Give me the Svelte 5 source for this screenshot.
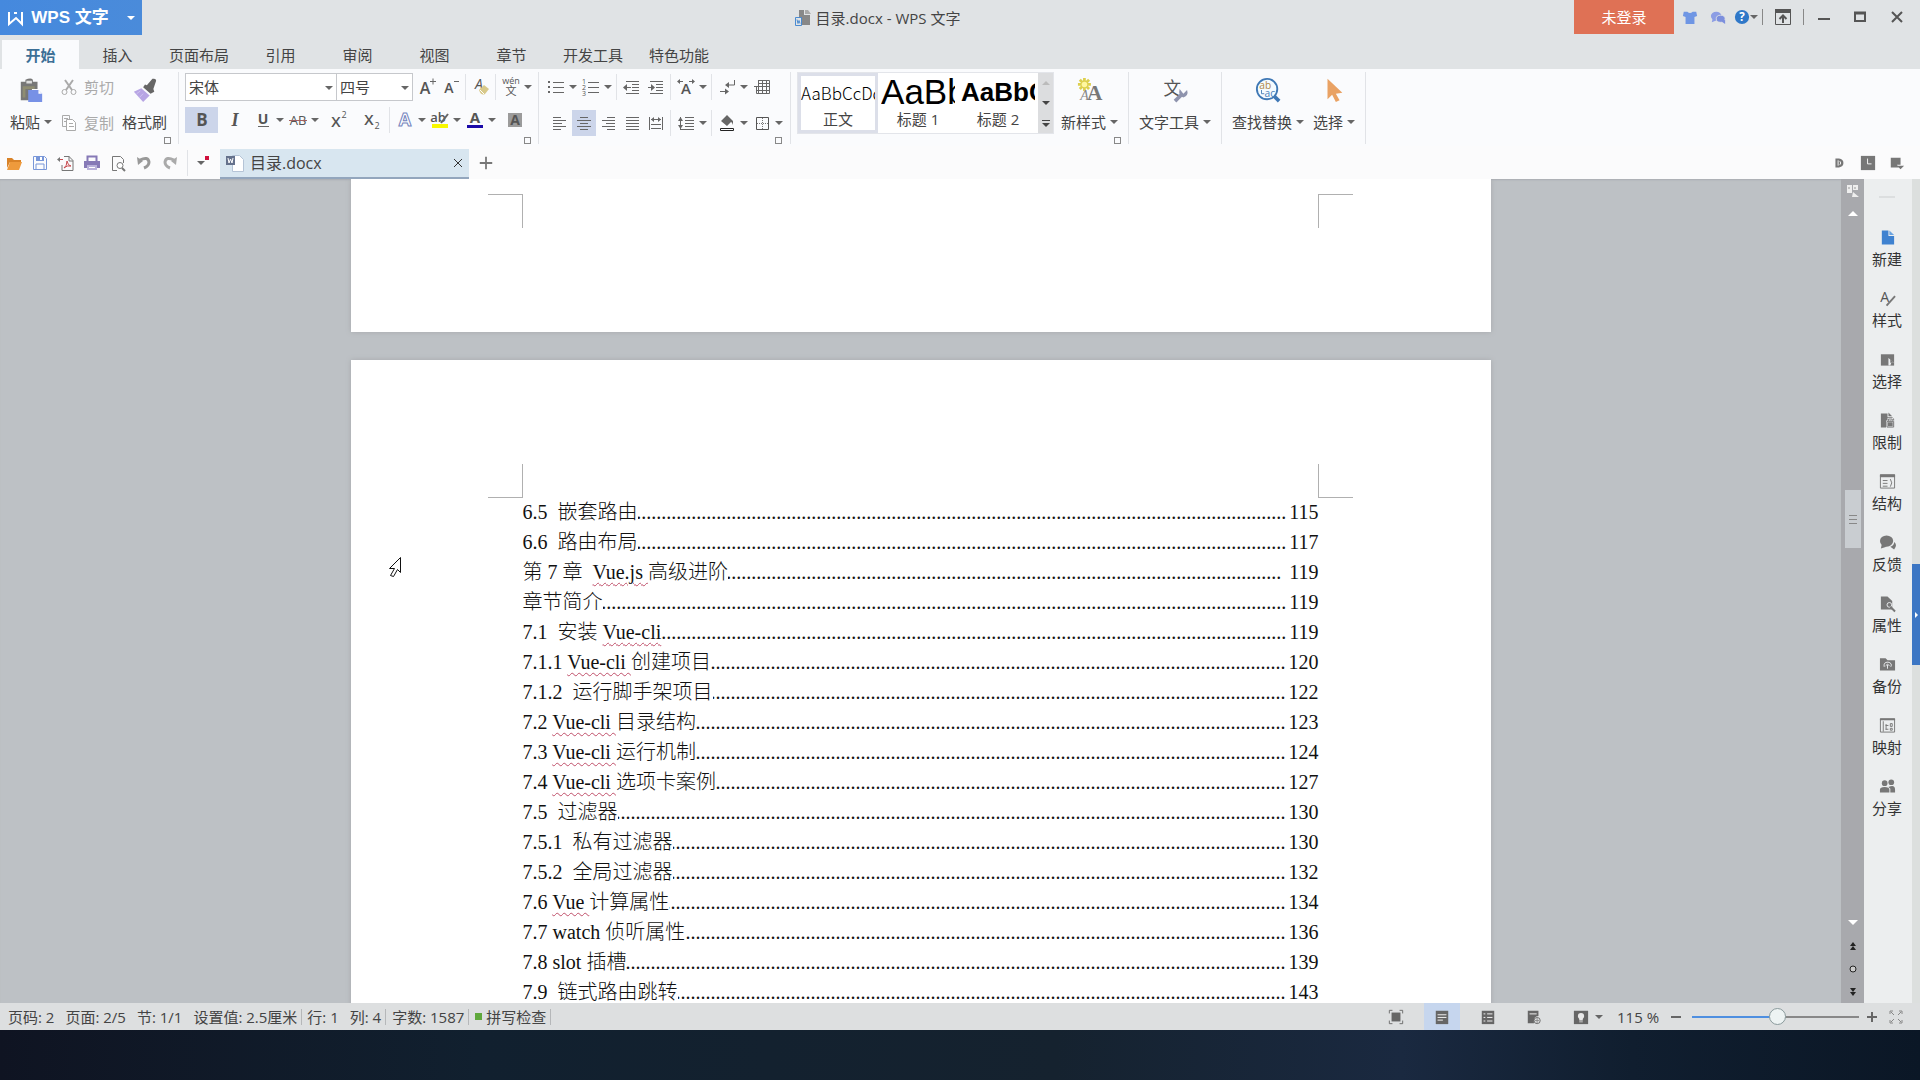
<script lang="ts">
	type Tool = { icon?: string; label?: string; kind?: 'split' | 'wide' | 'sep'; on?: boolean };

	const menus = ['开始', '插入', '页面布局', '引用', '审阅', '视图', '章节', '开发工具', '特色功能'];

	const fontTop: Tool[] = [
		{ icon: 'grow', label: '增大字号' },
		{ icon: 'shrink', label: '减小字号' },
		{ kind: 'sep' },
		{ icon: 'clear', label: '清除格式' },
		{ kind: 'sep' },
		{ icon: 'pinyin', label: '拼音指南', kind: 'split' }
	];
	const fontBottom: Tool[] = [
		{ icon: 'bold', label: '加粗', kind: 'wide', on: true },
		{ icon: 'italic', label: '倾斜', kind: 'wide' },
		{ icon: 'underline', label: '下划线', kind: 'split' },
		{ icon: 'strike', label: '删除线', kind: 'split' },
		{ icon: 'sup', label: '上标', kind: 'wide' },
		{ icon: 'sub', label: '下标', kind: 'wide' },
		{ kind: 'sep' },
		{ icon: 'effect', label: '文字效果', kind: 'split' },
		{ icon: 'highlight', label: '突出显示', kind: 'split' },
		{ icon: 'color', label: '字体颜色', kind: 'split' },
		{ icon: 'shade', label: '字符底纹', kind: 'wide' }
	];
	const paraTop: Tool[] = [
		{ icon: 'bullets', label: '项目符号', kind: 'split' },
		{ icon: 'numbers', label: '编号', kind: 'split' },
		{ kind: 'sep' },
		{ icon: 'outdent', label: '减少缩进量' },
		{ icon: 'indent', label: '增加缩进量' },
		{ kind: 'sep' },
		{ icon: 'scale', label: '中文版式', kind: 'split' },
		{ kind: 'sep' },
		{ icon: 'marks', label: '显示段落标记', kind: 'split' },
		{ icon: 'grid', label: '插入表格' }
	];
	const paraBottom: Tool[] = [
		{ icon: 'left', label: '左对齐' },
		{ icon: 'center', label: '居中对齐', on: true },
		{ icon: 'right', label: '右对齐' },
		{ icon: 'justify', label: '两端对齐' },
		{ icon: 'distribute', label: '分散对齐' },
		{ kind: 'sep' },
		{ icon: 'spacing', label: '行距', kind: 'split' },
		{ kind: 'sep' },
		{ icon: 'bucket', label: '底纹颜色', kind: 'split' },
		{ icon: 'border', label: '边框', kind: 'split' }
	];
	const quick = [
		['folder', '打开'],
		['save', '保存'],
		['pdf', '输出为PDF'],
		['print', '打印'],
		['preview', '打印预览'],
		['undo', '撤消'],
		['redo', '恢复']
	];
	const panels = [
		['newdoc', '新建'],
		['stylepen', '样式'],
		['pick', '选择'],
		['limit', '限制'],
		['outline', '结构'],
		['feedback', '反馈'],
		['props', '属性'],
		['backup', '备份'],
		['map', '映射'],
		['share', '分享']
	];
	const views = [
		['vfull', '全屏显示'],
		['vpage', '页面视图'],
		['voutline', '大纲'],
		['vweb', 'Web版式']
	];

	// [before, misspelled word, after, page]
	const toc = [
		['6.5  嵌套路由', '', '', '115'],
		['6.6  路由布局', '', '', '117'],
		['第 7 章  ', 'Vue.js ', '高级进阶', ' 119'],
		['章节简介', '', '', '119'],
		['7.1  安装 ', 'Vue-cli', '', '119'],
		['7.1.1 ', 'Vue-cli ', '创建项目', '120'],
		['7.1.2  运行脚手架项目', '', '', '122'],
		['7.2 ', 'Vue-cli ', '目录结构', '123'],
		['7.3 ', 'Vue-cli ', '运行机制', '124'],
		['7.4 ', 'Vue-cli ', '选项卡案例', '127'],
		['7.5  过滤器', '', '', '130'],
		['7.5.1  私有过滤器', '', '', '130'],
		['7.5.2  全局过滤器', '', '', '132'],
		['7.6 ', 'Vue ', '计算属性', '134'],
		['7.7 watch 侦听属性', '', '', '136'],
		['7.8 slot 插槽', '', '', '139'],
		['7.9  链式路由跳转', '', '', '143']
	];
	const dots = '.'.repeat(200);

	const line = (d: string, c = '#666', w = 1) => `<path d="${d}" fill="none" stroke="${c}" stroke-width="${w}"/>`;
	const fill = (d: string, c = '#666') => `<path d="${d}" fill="${c}"/>`;
	const text = (t: string, x: number, y: number, size: number, extra = '') =>
		`<text x="${x}" y="${y}" font-size="${size}" text-anchor="middle" fill="#555" ${extra}>${t}</text>`;

	const icons: Record<string, string> = {
		grow: text('A', 7, 16, 16, 'font-weight="600"') + line('M12 3.5h6M15 .5v6', '#666', 1),
		shrink: text('A', 7, 15, 14, 'font-weight="600"') + line('M12 3.5h5', '#666', 1),
		clear: text('A', 7, 11, 14, 'font-style="italic"') + fill('M7 12l5-5 5 4-4 5q-4 2-6-4z', '#d8c98a') + line('M8 12l4 4', '#fff', 1),
		pinyin: text('wén', 9, 6, 9) + text('文', 9, 17, 11),
		bold: text('B', 9, 15, 17, 'font-weight="700"'),
		italic: text('I', 9, 15, 18, 'font-style="italic" font-weight="700" font-family="Liberation Serif"'),
		underline: text('U', 9, 13, 14, 'font-weight="700"') + line('M4 15.5h11', '#666', 1),
		strike: text('AB', 9, 14, 13, 'font-weight="400"') + line('M0 9.5h18', '#a06060', 1),
		sup: text('X', 7, 16, 15, 'font-weight="600"') + text('2', 15, 7, 9),
		sub: text('X', 7, 14, 15, 'font-weight="600"') + text('2', 15, 18, 9),
		effect: '<text x="9" y="15" font-size="18" font-weight="700" text-anchor="middle" fill="#fff" stroke="#7484bd" stroke-width="1">A</text>',
		highlight: text('ab', 7, 11, 13, 'font-weight="600"') + line('M17 3l-7 9', '#666', 2) + fill('M1 13h16v4H1z', '#f8f800'),
		color: text('A', 9, 12, 15, 'font-weight="700"') + fill('M1 14h16v3H1z', '#1a0aa8'),
		shade: fill('M2 2h14v14H2z', '#9b9b9b') + text('A', 9, 14, 14, 'font-weight="700"'),
		bullets: fill('M1 3h2v2H1zM1 8h2v2H1zM1 13h2v2H1z') + line('M6 4.5h11M6 9.5h11M6 14.5h11'),
		numbers: text('1', 2, 6, 7) + text('2', 2, 12, 7) + text('3', 2, 18, 7) + line('M6 4.5h11M6 9.5h11M6 14.5h11'),
		outdent: line('M3 3.5h13M9 6.5h7M9 9.5h7M9 12.5h7M3 15.5h13') + line('M8 9.5H3') + fill('M4 6v7L0 9.5z'),
		indent: line('M3 3.5h13M9 6.5h7M9 9.5h7M9 12.5h7M3 15.5h13') + line('M1 9.5h4') + fill('M4 6v7l4-3.5z'),
		scale: text('A', 9, 16, 15, 'font-weight="600"') + fill('M3 1v5L0 3.500zM15 1v5l3-2.500z') + line('M2 3.500h4M12 3.500h4'),
		marks: line('M16.5 2v5H9M2 13.5h7') + fill('M11 4v6L7 7zM7 10.500v6l4-3z'),
		grid: line('M5.500 2.500h11v13h-13v-7M1 8.500h16M5.500 2v13M9.500 2v13M13.500 2v13M4 12.500h13M5 5.500h12'),
		left: line('M2 3.500h8M2 6.500h13M2 9.500h9M2 12.500h13M2 15.500h8'),
		center: line('M5 3.500h8M2 6.500h14M5 9.500h8M2 12.500h14M5 15.500h8'),
		right: line('M8 3.500h8M3 6.500h13M7 9.500h9M3 12.500h13M8 15.500h8'),
		justify: line('M3 3.500h13M3 6.500h13M3 9.500h13M3 12.500h13M3 15.500h13'),
		distribute: line('M2.500 3v13M15.500 3v13M4 5.500h10M4 10.500h10M4 14.500h10') + fill('M7 3v5L4 5.500zM11 3v5l3-2.500z'),
		spacing: line('M8 3.500h9M8 6.500h9M8 9.500h9M8 12.500h9M3 15.500h14M3.500 3v12') + fill('M1 7l2.500-4L6 7zM1 11l2.500 4L6 11z'),
		bucket: fill('M3 7l6-6 6 6v4q-1-3-2-3l-4 4z') + line('M2.500 14.500h13v2h-13z', '#222'),
		border: line('M3.500 3.500h12v12h-12z', '#555') + '<path d="M9.500 4v11M4 9.500h11" stroke="#777" stroke-dasharray="1 1"/>',
		cut: line('M5 2l7 10M13 2L6 12', '#aaa', 2) + '<circle cx="4.500" cy="14" r="2.500" fill="none" stroke="#aaa"/><circle cx="13.500" cy="14" r="2.500" fill="none" stroke="#aaa"/>',
		copy: line('M2.500 1.500h7v11h-7zM4 4.500h4M4 7.500h4', '#aaa') + '<path d="M6.500 5.500h6l3 3v8h-9z" fill="#fff" stroke="#aaa"/>' + line('M9 9.500h4M9 12.500h5', '#aaa'),
		folder: fill('M2 4h5l2 2h7v2H5l-3 6z', '#d98227') + fill('M5 8h12l-3 8H2z', '#ee9a3c'),
		save: line('M2.500 2.500h11l2 2v11h-13z', '#7896d8', 1) + fill('M5 2h8v5H5z', '#7896d8') + fill('M9 3h2v3H9z', '#fff') + line('M5 15V10h8v5', '#7896d8'),
		pdf: line('M7 2.500h5l4 4v10H5V11M12 2v5h4', '#777') + line('M7 14q3-2 3-7q1 5 4 5q-4-1-7 2M1 5.500h5', '#c74a4f') + fill('M3 3v5L0 5.500z', '#777'),
		print: fill('M1 7h16v7H1z', '#8679b6') + line('M4.500 7V2.500h9V7', '#8679b6', 2) + fill('M4 11h10v5H4z', '#b9b1da') + line('M6 13.500h6', '#fff'),
		preview: line('M8 16.500H3.500v-14h8l3 3V9', '#777') + '<circle cx="11" cy="11.500" r="3" fill="#fff" stroke="#777"/>' + line('M13 14l3 3', '#777', 2),
		undo: line('M5 6q8-4 9 2q0 4-5 6', '#999', 3) + fill('M2 3l1 8 5-4z', '#999'),
		redo: line('M13 6Q5 2 4 8q0 4 5 6', '#aaa', 3) + fill('M16 3l-1 8-5-4z', '#aaa'),
		worddoc: '<path d="M6.500 1.500h7l4 4v12h-11z" fill="#fff" stroke="#b5c4d6"/>' + fill('M0 2h9v9H0z', '#65728c') + line('M2 4l1 5 1.500-4L6 9l1-5', '#fff'),
		titledoc: fill('M5 1h5v5H8v3H5zM8 6h8v10H8z', '#888') + fill('M11 1h3l3 4h-6z', '#aaa') + line('M1.500 8.500h6v8h-6zM3 10.500l1 4 1-3 1 3', '#4b8bd0'),
		shirt: fill('M2 3h4q3 3 6 0h4l1 5-3 1v8H4V9L1 8z', '#6f96e4'),
		chat: '<ellipse cx="7" cy="8" rx="6" ry="5" fill="#8c9de4"/>' + fill('M3 11l-1 4 5-2z', '#8c9de4') + '<ellipse cx="12" cy="11" rx="5" ry="4" fill="#7c8fdd" stroke="#dfe2e4"/>' + fill('M13 14l4 3v-5z', '#7c8fdd'),
		help: '<circle cx="9" cy="9" r="8" fill="#2f78c8"/><text x="9" y="14" font-size="13" font-weight="700" text-anchor="middle" fill="#fff">?</text>',
		ribbon: line('M1.500 2v14.500h15V2', '#555', 1) + fill('M1 1h16v4H1z', '#555') + line('M9 15V8M5.500 11L9 7.500 12.500 11', '#555', 2),
		min: line('M3 11h12', '#555', 2),
		max: line('M4 5h10v8H4z', '#555', 2) + line('M3 5h12', '#555', 3),
		close: line('M4 4l10 10M14 4L4 14', '#555', 2),
		x: line('M5 5l8 8M13 5l-8 8', '#333', 1),
		plus: line('M9 2v14M2 9h14', '#777', 2),
		small_d: fill('M5 4h4q5 1 5 5t-5 5H5z', '#777') + line('M8 6v6M10 7q2 2 0 4', '#fff'),
		clock: fill('M1 1h16v16H1z', '#777') + line('M8.500 4v6H13', '#fff', 1),
		panel: fill('M2 3h11v8H9l2 3H2zM9 12h8l-4 4z', '#777'),
		newdoc: fill('M3 2h7v6h6v9H3z', '#3f82d0') + fill('M11 2l5 5h-5z', '#6ca4e0'),
		stylepen: text('A', 6, 13, 15) + line('M17 7l-9 10', '#777', 2),
		pick: fill('M2 4h14v12H2z', '#777') + fill('M10 8l6 5h-3l-1 3h-2z', '#eceef0') + fill('M12 9l4 4h-4z', '#777'),
		limit: fill('M2 2h7v4h5l2 2v9H2z', '#777') + fill('M10 1l4 4h-4z', '#777') + line('M8.500 10.500h7v6h-7zM10 10V8h4v2', '#eceef0', 2) + line('M8.500 10.500h7v6h-7zM10 10V8h4v2', '#777'),
		outline: line('M1.500 2.500h15v14h-15zM4 8.500h5M4 11.500h5M4 14.500h5M12 7q3 4 0 8', '#777') + fill('M1 2h16v3H1z', '#777'),
		feedback: '<ellipse cx="8" cy="8" rx="7" ry="6" fill="#777"/>' + fill('M3 11l-1 5 6-2zM12 14q4-1 4-5 4 3 0 8z', '#777'),
		props: fill('M2 2h7l5 5v9H2z', '#777') + '<circle cx="11" cy="11" r="2.500" fill="#777" stroke="#eceef0"/>' + line('M12 13l5 5', '#777', 2),
		backup: fill('M1 3h6l2 2h8v11H1z', '#777') + line('M5.500 12q-1-5 4-5 5 1 3 5M9 14v-4M7 11l2-2 2 2', '#eceef0'),
		map: line('M1.500 2.500h15v14h-15zM4.500 5v11M7 9.500h3M7 13.500h3M7.500 8v6M12 7.500h2v3h-2zM12 12.500h2v2h-2z', '#777') + fill('M1 2h16v2H1z', '#777'),
		share: '<circle cx="6" cy="6" r="3" fill="#777"/><circle cx="13" cy="5" r="3" fill="#777"/>' + fill('M1 16v-3q0-3 5-3t5 3v3zM12 16v-4l-2-2q7-3 7 3v3z', '#777'),
		vfull: fill('M4 4h10v10H4z') + line('M1.500 5V1.500H5M13 1.500h3.500V5M16.500 13v3.500H13M5 16.500H1.500V13'),
		vpage: fill('M2 2h14v15H2z') + line('M4 6.500h10M4 9.500h10M4 12.500h6', '#fff'),
		voutline: fill('M2 2h14v15H2z') + line('M4 5.500h2M8 5.500h6M4 9.500h2M8 9.500h6M4 13.500h2M8 13.500h6', '#fff'),
		vweb: fill('M2 2h12v6q-6 0-5 8H2z') + line('M4 5.500h8', '#fff') + '<circle cx="12.500" cy="13" r="3.500" fill="none" stroke="#666"/>' + line('M10 13h5M12.500 10v6', '#888'),
		protect: fill('M1 2h16v15H1z') + '<circle cx="9" cy="8" r="3.500" fill="#e8e8e8"/>' + fill('M7 10h4v3H7zM7 14h4v1H7z', '#e8e8e8'),
		fit: line('M3 6V3h3M12 3h3v3M15 12v3h-3M6 15H3v-3M4 4l3 3M14 4l-3 3M14 14l-3-3M4 14l3-3', '#888'),
		minus: line('M4 9h10', '#666', 2),
		add: line('M4 9h10M9 4v10', '#666', 2)
	};

	const bigIcons: Record<string, string> = {
		paste: fill('M3 5h5V3q6-3 8 0v2h5v8h-6v12H3z', '#777') + fill('M9 4h6v3H9z', '#ddd') + fill('M5 10h13v3H8v9H5z', '#8f8d72') + fill('M11 14h11l4 4v9H11z', '#7791e6') + fill('M22 14l4 4h-4z', '#fff'),
		brush: fill('M16 9l6-7q4-1 4 2l-3 9 1 3-4 2-8-7 2-3z', '#666') + fill('M10 12l9 8-7 7L2 16z', '#b7a5e4') + line('M5 18l4-3M8 22l4-4', '#d0c4f0'),
		newstyle: '<path d="M8 1v14M1 8h14M3 3l10 10M13 3L3 13" stroke="#ddd04e" stroke-width="3"/><circle cx="8" cy="8" r="3" fill="#fff7a0"/>' + '<text x="19" y="25" font-family="Liberation Serif" font-size="23" font-weight="700" text-anchor="middle" fill="#777">A</text><text x="8" y="25" font-family="Liberation Serif" font-size="15" font-style="italic" text-anchor="middle" fill="#888">A</text>',
		texttool: text('文', 11, 19, 19) + line('M14 26l8-8', '#8e93ad', 4) + fill('M19 13l4 5 4-4q2 6-4 8-6-2-4-9z', '#8e93ad'),
		find: '<circle cx="13" cy="13" r="11" fill="#f4fbff" stroke="#3f78b5" stroke-width="2"/>' + line('M21 21l5 5', '#3f78b5', 4) + '<text x="11" y="13" font-size="11" text-anchor="middle" fill="#b08848">ab</text><text x="16" y="21" font-size="11" text-anchor="middle" fill="#4a7fb8">ac</text>' + line('M7 14v4h3', '#4a7fb8'),
		select: fill('M7 2v22l5-5 4 8 4-2-4-7 7-1z', '#e9a264')
	};

	let font = $state('宋体');
	let size = $state('四号');
	let zoom = $state(51);
</script>

{#snippet icon(name: string)}
	<svg class="icon" viewBox="0 0 18 18" aria-hidden="true">{@html icons[name]}</svg>
{/snippet}

{#snippet tools(list: Tool[])}
	{#each list as t}
		{#if t.kind === 'sep'}
			<span class="sep"></span>
		{:else}
			<button class="tool {t.kind ?? ''}" class:on={t.on} aria-label={t.label}>
				{@render icon(t.icon ?? '')}
				{#if t.kind === 'split'}<i class="caret"></i>{/if}
			</button>
		{/if}
	{/each}
{/snippet}

{#snippet big(name: string, label: string, caret: boolean)}
	<button class="big">
		<svg class="big-icon" viewBox="0 0 28 28" aria-hidden="true">{@html bigIcons[name]}</svg>
		<span class="big-label">{label}{#if caret}<i class="caret"></i>{/if}</span>
	</button>
{/snippet}

<div class="desktop">
	<div class="window">
		<header class="titlebar">
			<button class="brand">
				<svg class="icon" viewBox="0 0 18 18" aria-hidden="true">
					<path d="M2 3v12l7-6 6 6V3M7 4h3" fill="none" stroke="#fff" stroke-width="2" />
				</svg>
				<span>WPS 文字</span>
				<i class="caret light"></i>
			</button>
			<div class="title">{@render icon('titledoc')}<span>目录.docx - WPS 文字</span></div>
			<button class="login">未登录</button>
			<div class="controls">
				<button class="ctl small" aria-label="皮肤">{@render icon('shirt')}</button>
				<button class="ctl small" aria-label="消息">{@render icon('chat')}</button>
				<button class="ctl small help" aria-label="帮助">{@render icon('help')}<i class="caret"></i></button>
				<span class="bar"></span>
				<button class="ctl" aria-label="隐藏功能区">{@render icon('ribbon')}</button>
				<span class="bar"></span>
				<button class="ctl" aria-label="最小化">{@render icon('min')}</button>
				<button class="ctl" aria-label="最大化">{@render icon('max')}</button>
				<button class="ctl quit" aria-label="关闭">{@render icon('close')}</button>
			</div>
		</header>

		<nav class="menus">
			{#each menus as m, i}
				<button class="menu" class:active={i === 0}>{m}</button>
			{/each}
		</nav>

		<div class="ribbon">
			<section class="group clipboard">
				<div class="body">
					{@render big('paste', '粘贴', true)}
					<div class="rows loose">
						<button class="inline" disabled>{@render icon('cut')}剪切</button>
						<button class="inline" disabled>{@render icon('copy')}复制</button>
					</div>
					{@render big('brush', '格式刷', false)}
				</div>
				<button class="launcher" aria-label="剪贴板"></button>
			</section>

			<section class="group font">
				<div class="rows">
					<div class="row">
						<label class="combo family">
							<select bind:value={font} aria-label="字体"><option>宋体</option><option>黑体</option></select>
							<i class="caret"></i>
						</label>
						<label class="combo size">
							<select bind:value={size} aria-label="字号"><option>四号</option><option>五号</option></select>
							<i class="caret"></i>
						</label>
						{@render tools(fontTop)}
					</div>
					<div class="row">{@render tools(fontBottom)}</div>
				</div>
				<button class="launcher" aria-label="字体设置"></button>
			</section>

			<section class="group para">
				<div class="rows loose">
					<div class="row">{@render tools(paraTop)}</div>
					<div class="row align">{@render tools(paraBottom)}</div>
				</div>
				<button class="launcher" aria-label="段落设置"></button>
			</section>

			<section class="group styles">
				<div class="body">
					<div class="gallery">
						<button class="style chosen"><span class="sample normal">AaBbCcDd</span><span>正文</span></button>
						<button class="style"><span class="sample h1">AaBb</span><span>标题 1</span></button>
						<button class="style"><span class="sample h2">AaBbC</span><span>标题 2</span></button>
						<div class="spin">
							<button aria-label="上一行"><i class="caret up"></i></button>
							<button aria-label="下一行"><i class="caret"></i></button>
							<button class="more" aria-label="更多样式"><i class="caret"></i></button>
						</div>
					</div>
					{@render big('newstyle', '新样式', true)}
				</div>
				<button class="launcher" aria-label="样式设置"></button>
			</section>

			<section class="group pad">
				<div class="body">{@render big('texttool', '文字工具', true)}</div>
			</section>
			<section class="group pad">
				<div class="body">
					{@render big('find', '查找替换', true)}
					{@render big('select', '选择', true)}
				</div>
			</section>
		</div>

		<div class="docbar">
			{#each quick as [name, label]}
				<button class="quick" aria-label={label}>{@render icon(name)}</button>
			{/each}
			<span class="sep tall"></span>
			<button class="custom" aria-label="自定义"><i class="caret"></i><b class="dot"></b></button>
			<div class="doctab">
				{@render icon('worddoc')}
				<span class="name">目录.docx</span>
				<button aria-label="关闭文档">{@render icon('x')}</button>
			</div>
			<button class="addtab" aria-label="新建文档">{@render icon('plus')}</button>
			<div class="docright">
				<button aria-label="文档漫游">{@render icon('small_d')}</button>
				<button aria-label="历史">{@render icon('clock')}</button>
				<button aria-label="窗格">{@render icon('panel')}</button>
			</div>
		</div>

		<main class="work">
			<div class="canvas">
				<article class="page previous">
					<div class="corners"><i class="tl"></i><i class="tr"></i></div>
				</article>
				<article class="page current">
					<div class="corners"><i class="bl"></i><i class="br"></i></div>
					<ol class="toc">
						{#each toc as [before, word, after, num]}
							<li>
								<span class="entry">{before}{#if word}<u>{word}</u>{/if}{after}</span>
								<span class="leader">{dots}</span>
								<span class="entry num">{num}</span>
							</li>
						{/each}
					</ol>
				</article>
				<svg class="pointer" viewBox="0 0 14 22" aria-hidden="true">
					<path d="M12.500 1.500v15l-3-3-4 7-3-1 4-7H1.500z" fill="#fff" stroke="#111" />
				</svg>
			</div>

			<div class="scroll">
				<svg class="icon" viewBox="0 0 18 18" aria-hidden="true">
					<path d="M3 3h5v8H3zM9 3h5v5H9zM9 10l6 5H8z" fill="#eee" />
					<path d="M5 5v2M11 5v2" stroke="#999" />
				</svg>
				<button aria-label="向上滚动"><i class="tri up"></i></button>
				<div class="track"><div class="thumb"><i></i><i></i><i></i></div></div>
				<button aria-label="向下滚动"><i class="tri down"></i></button>
				<button aria-label="上一页">
					<svg viewBox="0 0 10 10"><path d="M5 1l3 4H2zM5 5l3 4H2z" fill="#222" /></svg>
				</button>
				<button aria-label="选择浏览对象">
					<svg viewBox="0 0 10 10"><circle cx="5" cy="5" r="3" fill="#ccc" stroke="#222" /></svg>
				</button>
				<button aria-label="下一页">
					<svg viewBox="0 0 10 10"><path d="M2 1h6L5 5zM2 5h6L5 9z" fill="#222" /></svg>
				</button>
			</div>

			<aside class="side">
				<i class="grip"></i>
				{#each panels as [name, label]}
					<button class="panel">{@render icon(name)}<span>{label}</span></button>
				{/each}
			</aside>
			<div class="edge"><button aria-label="收起侧栏"></button></div>
		</main>

		<footer class="status">
			<span>页码: 2</span>
			<span>页面: 2/5</span>
			<span>节: 1/1</span>
			<span class="cell">设置值: 2.5厘米</span>
			<span class="tight">行: 1</span>
			<span class="cell">列: 4</span>
			<span class="cell">字数: 1587</span>
			<button class="spell cell"><i></i>拼写检查</button>
			<div class="views">
				{#each views as [name, label], i}
					<button class:on={i === 1} aria-label={label}>{@render icon(name)}</button>
				{/each}
			</div>
			<button class="protect" aria-label="护眼模式">{@render icon('protect')}<i class="caret"></i></button>
			<div class="zoombar">
				<span class="percent">115 %</span>
				<button class="step" aria-label="缩小">{@render icon('minus')}</button>
				<input class="zoom" type="range" min="0" max="100" bind:value={zoom} aria-label="显示比例" style="--fill: {zoom}%" />
				<button class="step" aria-label="放大">{@render icon('add')}</button>
				<button class="step" aria-label="最佳比例">{@render icon('fit')}</button>
			</div>
		</footer>
	</div>
	<div class="taskbar"></div>
</div>

<style>
	:global(body) {
		margin: 0;
	}
	.desktop {
		display: flex;
		flex-direction: column;
		height: 100vh;
		overflow: hidden;
		font-family: 'Open Sans', 'Noto Sans CJK SC', sans-serif;
		font-size: 15px;
		line-height: 20px;
		color: #444;
	}
	.window {
		flex: 1;
		min-height: 0;
		display: flex;
		flex-direction: column;
		background: #e0e3e5;
	}
	.taskbar {
		height: 50px;
		background: linear-gradient(90deg, #0f1422, #11202f 25%, #15222f 55%, #1a2940 73%, #101e2f 85%, #0b1726);
	}
	button {
		display: flex;
		align-items: center;
		justify-content: center;
		flex: none;
		padding: 0;
		border: 0;
		background: none;
		font: inherit;
		color: inherit;
		white-space: nowrap;
	}
	.icon,
	.big-icon {
		flex: none;
		overflow: visible;
	}
	.icon {
		width: 18px;
		height: 18px;
	}
	.caret {
		flex: none;
		border: 4px solid transparent;
		border-top-color: #666;
		border-bottom: 0;
	}
	.caret.light {
		border-top-color: #fff;
	}
	.caret.up {
		border-top: 0;
		border-bottom: 4px solid #bbb;
	}

	.titlebar {
		display: flex;
		height: 35px;
		margin-bottom: 5px;
	}
	.brand {
		width: 142px;
		height: 35px;
		background: linear-gradient(90deg, #4589de, #4a8bda);
		color: #fff;
		font-family: 'Liberation Sans', 'Noto Sans CJK SC', sans-serif;
		font-size: 17px;
		font-weight: 700;
		gap: 6px;
	}
	.brand .caret {
		margin-left: 12px;
	}
	.title {
		flex: 1;
		display: flex;
		align-items: center;
		justify-content: center;
		gap: 4px;
		padding-left: 38px;
	}
	.login {
		width: 100px;
		height: 34px;
		background: #df7155;
		color: #fff;
	}
	.controls {
		display: flex;
		align-items: center;
		height: 34px;
		padding: 0 4px 0 2px;
	}
	.ctl {
		width: 36px;
		height: 34px;
	}
	.small {
		width: 28px;
	}
	.quit {
		width: 38px;
	}
	.small .icon {
		width: 16px;
		height: 16px;
	}
	.bar {
		width: 1px;
		height: 16px;
		margin: 0 2px;
		background: #888;
	}

	.menus {
		display: flex;
		padding-left: 2px;
	}
	.menu {
		min-width: 77px;
		height: 29px;
		padding: 0 13px;
	}
	.menu.active {
		background: #fafbfd;
		color: #3c6f96;
		font-weight: 700;
	}

	.ribbon {
		display: flex;
		height: 77px;
		background: #fafbfd;
	}
	.group {
		display: flex;
		flex-direction: column;
		justify-content: space-between;
		margin: 3px 0 2px;
		padding-top: 1px;
		border-right: 1px solid #e1e3e7;
	}
	.body,
	.row {
		display: flex;
	}
	.rows {
		display: flex;
		flex-direction: column;
		gap: 6px;
	}
	.loose {
		gap: 9px;
	}
	.row {
		align-items: center;
		height: 26px;
	}
	.row:first-child {
		height: 28px;
	}
	.align {
		padding-left: 4px;
	}
	.clipboard {
		padding-left: 10px;
	}
	.clipboard .body {
		gap: 8px;
		padding-right: 11px;
	}
	.font {
		padding-left: 6px;
		padding-right: 4px;
	}
	.para {
		padding: 1px 5px 0;
	}
	.styles {
		padding-left: 7px;
	}
	.styles .body {
		gap: 8px;
		padding-right: 10px;
	}
	.pad {
		padding-left: 10px;
		padding-right: 10px;
	}
	.pad .body {
		gap: 9px;
	}
	.launcher {
		align-self: flex-end;
		width: 7px;
		height: 7px;
		margin-right: 7px;
		border: 1px solid #888;
	}
	.font .launcher,
	.para .launcher {
		margin-right: 3px;
	}
	.tool {
		width: 24px;
		height: 26px;
	}
	.tool.wide {
		width: 33px;
	}
	.tool.split {
		width: 35px;
		padding-left: 3px;
		gap: 4px;
		justify-content: flex-start;
	}
	.tool.on {
		background: #ccd5ea;
	}
	.sep {
		width: 1px;
		height: 26px;
		margin: 0 3px 0 2px;
		background: #e1e3e7;
	}
	.combo {
		position: relative;
		box-sizing: border-box;
		height: 28px;
		border: 1px solid #c6c8cc;
		background: #fff;
	}
	.combo select {
		width: 100%;
		height: 100%;
		padding: 0 3px;
		border: 0;
		appearance: none;
		background: none;
		font: inherit;
		color: inherit;
	}
	.combo .caret {
		position: absolute;
		right: 3px;
		top: 12px;
		pointer-events: none;
	}
	.family {
		width: 152px;
	}
	.size {
		width: 77px;
		margin-left: -1px;
		margin-right: 2px;
	}
	.big {
		flex-direction: column;
		justify-content: flex-start;
		padding-top: 4px;
		min-width: 42px;
	}
	.big-icon {
		width: 26px;
		height: 26px;
	}
	.big-label {
		display: flex;
		align-items: center;
		gap: 4px;
		margin-top: 9px;
	}
	.inline {
		height: 26px;
		gap: 6px;
		color: #aaa;
	}
	.inline:first-child {
		height: 28px;
	}
	.gallery {
		display: flex;
		height: 60px;
		background: #fff;
		box-shadow: 0 0 0 1px #e3e5ea;
	}
	.style {
		box-sizing: border-box;
		flex-direction: column;
		justify-content: space-between;
		align-items: stretch;
		width: 80px;
		padding: 2px 3px 4px;
	}
	.style.chosen {
		border: 3px solid #dcdfe9;
		padding: 0 0 1px;
	}
	.sample {
		height: 34px;
		overflow: hidden;
		line-height: 34px;
		text-align: left;
		color: #000;
		font-family: 'Liberation Sans', sans-serif;
	}
	.normal {
		font-family: 'Noto Sans CJK SC', sans-serif;
		font-size: 17px;
		font-weight: 300;
	}
	.h1 {
		font-size: 35px;
	}
	.h2 {
		font-size: 26px;
		font-weight: 700;
	}
	.spin {
		display: flex;
		flex-direction: column;
		width: 15px;
		background: #dcdddf;
	}
	.spin button {
		flex: 1;
	}
	.spin .caret:not(.up) {
		border-top-color: #444;
	}
	.more::before {
		content: '';
		width: 8px;
		height: 1px;
		margin-bottom: 2px;
		background: #444;
	}
	.more {
		flex-direction: column;
	}

	.docbar {
		display: flex;
		align-items: center;
		height: 33px;
		padding-left: 1px;
		background: #fbfbfc;
	}
	.quick {
		width: 26px;
		height: 26px;
	}
	.sep.tall {
		margin: 0 5px 0 4px;
	}
	.custom {
		width: 20px;
		height: 20px;
	}
	.dot {
		width: 4px;
		height: 4px;
		margin-bottom: 10px;
		background: #d0103c;
	}
	.doctab {
		box-sizing: border-box;
		display: flex;
		align-items: center;
		align-self: flex-end;
		width: 249px;
		height: 30px;
		margin-left: 7px;
		padding: 0 2px 0 6px;
		gap: 6px;
		border-bottom: 2px solid #93a6bd;
		background: #d8e6f0;
		font-size: 16px;
	}
	.name {
		flex: 1;
	}
	.addtab {
		width: 34px;
		height: 30px;
	}
	.addtab .icon {
		width: 16px;
		height: 16px;
	}
	.docright {
		display: flex;
		margin-left: auto;
		padding-right: 9px;
	}
	.docright button {
		width: 29px;
		height: 26px;
	}
	.docright .icon {
		width: 16px;
		height: 16px;
	}

	.work {
		flex: 1;
		display: flex;
		min-height: 0;
		background: #bdc1c5;
	}
	.canvas {
		position: relative;
		flex: 1;
		overflow: hidden;
		box-shadow: inset 0 2px 2px -1px #a9acb1;
	}
	.page {
		width: 1140px;
		margin: 0 auto 28px;
		background: #fff;
		box-shadow: 0 0 5px #a6a8ac;
	}
	.previous {
		padding: 15px 0 104px;
	}
	.current {
		padding-top: 104px;
	}
	.corners {
		display: flex;
		justify-content: space-between;
		padding: 0 138px 0 137px;
	}
	.corners i {
		width: 34px;
		height: 33px;
		border: 0 solid #b0b0b0;
	}
	.corners .tl {
		border-width: 1px 1px 0 0;
	}
	.corners .tr {
		border-width: 1px 0 0 1px;
	}
	.corners .bl {
		border-width: 0 1px 1px 0;
	}
	.corners .br {
		border-width: 0 0 1px 1px;
	}
	.toc {
		list-style: none;
		margin: -1px 0 0;
		padding: 0 172px;
		font-family: 'Liberation Serif', 'Noto Sans CJK SC', serif;
		font-size: 20px;
		font-weight: 300;
		line-height: 30px;
		color: #111;
	}
	.toc li {
		display: flex;
		height: 30px;
	}
	.entry {
		white-space: pre;
	}
	.toc u {
		text-decoration: underline wavy #c0506a 1px;
		text-underline-offset: 3px;
	}
	.num {
		padding-left: 3px;
	}
	.leader {
		flex: 1;
		display: flex;
		justify-content: flex-end;
		overflow: hidden;
	}
	.pointer {
		position: absolute;
		left: 388px;
		top: 377px;
		width: 14px;
		height: 22px;
	}

	.scroll {
		display: flex;
		flex-direction: column;
		align-items: center;
		width: 23px;
		background: #a8a9ad;
	}
	.scroll .icon {
		margin: 3px 0 2px;
	}
	.scroll button {
		width: 23px;
		height: 23px;
	}
	.scroll button svg {
		width: 10px;
		height: 10px;
	}
	.tri {
		border: 5px solid transparent;
	}
	.tri.up {
		border-top: 0;
		border-bottom-color: #fff;
	}
	.tri.down {
		border-bottom: 0;
		border-top-color: #fff;
	}
	.track {
		flex: 1;
		padding-top: 265px;
	}
	.thumb {
		display: flex;
		flex-direction: column;
		align-items: center;
		justify-content: center;
		gap: 3px;
		width: 16px;
		height: 58px;
		background: #c9cdd1;
	}
	.thumb i {
		width: 8px;
		height: 1px;
		background: #888;
	}
	.side {
		display: flex;
		flex-direction: column;
		align-items: center;
		box-sizing: border-box;
		width: 48px;
		padding-right: 2px;
		background: #eceeef;
	}
	.grip {
		width: 16px;
		height: 2px;
		margin: 17px 0 29px;
		border: 1px solid #dcdedf;
		border-width: 1px 0;
		box-sizing: border-box;
	}
	.panel {
		flex-direction: column;
		justify-content: flex-start;
		gap: 2px;
		width: 46px;
		height: 61px;
		color: #333;
	}
	.panel .icon {
		width: 17px;
		height: 20px;
	}
	.edge {
		width: 8px;
		background: #dcdfde;
	}
	.edge button {
		width: 8px;
		height: 101px;
		margin-top: 385px;
		background: #3c76c4;
	}
	.edge button::before {
		content: '';
		border: 3px solid transparent;
		border-left-color: #fff;
		border-right: 0;
	}

	.status {
		display: flex;
		align-items: center;
		height: 27px;
		padding: 0 12px 0 8px;
		gap: 11px;
		background: #dddfe0;
		white-space: nowrap;
	}
	.cell {
		padding-right: 4px;
		border-right: 1px solid #b5b7b9;
		line-height: 16px;
	}
	.cell + .cell {
		margin-left: -5px;
	}
	.tight {
		margin-left: -6px;
	}
	.spell {
		gap: 4px;
	}
	.spell i {
		width: 7px;
		height: 7px;
		background: #5fa83c;
	}
	.views {
		display: flex;
		gap: 10px;
		margin: 0 6px 0 auto;
	}
	.views button {
		width: 36px;
		height: 27px;
	}
	.views .on {
		background: #c6d6ee;
	}
	.views .icon,
	.protect .icon {
		width: 16px;
		height: 16px;
	}
	.protect {
		gap: 6px;
		width: 37px;
	}
	.zoombar {
		display: flex;
		align-items: center;
	}
	.percent {
		width: 47px;
	}
	.step {
		width: 24px;
		height: 22px;
	}
	.zoom {
		width: 167px;
		height: 18px;
		margin: 0 1px 0 4px;
		appearance: none;
		background: linear-gradient(90deg, #4f8fe0 var(--fill), #888 var(--fill)) center / 100% 2px no-repeat;
	}
	.zoom::-webkit-slider-thumb {
		appearance: none;
		width: 17px;
		height: 17px;
		border: 1px solid #8a9a9c;
		border-radius: 50%;
		background: #edf3f3;
	}
</style>
